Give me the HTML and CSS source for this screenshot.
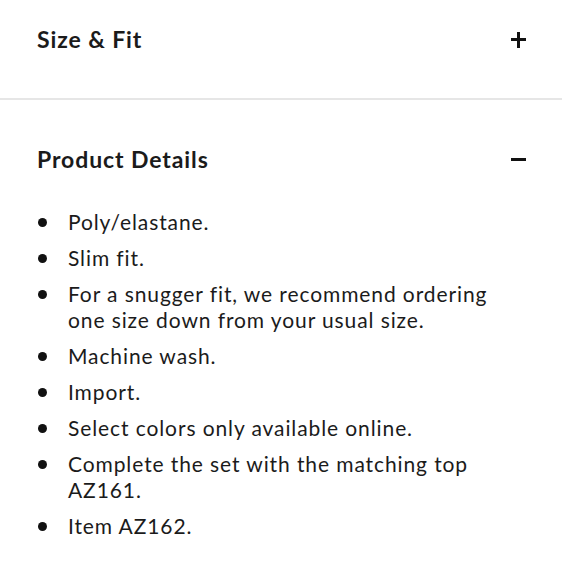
FILE: index.html
```html
<!DOCTYPE html>
<html lang="en">
<head>
<meta charset="utf-8">
<title>Product accordion</title>
<link rel="stylesheet" href="styles.css">
</head>
<body>
<div class="accordion">
  <section class="panel panel-closed">
    <div class="panel-head">
      <h2 class="panel-title">Size &amp; Fit</h2>
      <span class="toggle toggle-plus" aria-hidden="true"></span>
    </div>
  </section>
  <section class="panel panel-open">
    <div class="panel-head">
      <h2 class="panel-title">Product Details</h2>
      <span class="toggle" aria-hidden="true"></span>
    </div>
    <ul class="details">
      <li>Poly/elastane.</li>
      <li>Slim fit.</li>
      <li>For a snugger fit, we recommend ordering one size down from your usual size.</li>
      <li>Machine wash.</li>
      <li>Import.</li>
      <li>Select colors only available online.</li>
      <li>Complete the set with the matching top AZ161.</li>
      <li>Item AZ162.</li>
    </ul>
  </section>
</div>
</body>
</html>
```
FILE: styles.css
```css
html, body {
  margin: 0;
  padding: 0;
  background: #ffffff;
}
body {
  font-family: Lato, "Open Sans", "Liberation Sans", sans-serif;
  color: #1b1b1b;
}
.accordion {
  width: 562px;
}
.panel-closed {
  padding: 24px 0 44px;
  border-bottom: 2px solid #e6e6e6;
}
.panel-open {
  padding: 44px 0 0;
}
.panel-head {
  display: flex;
  justify-content: space-between;
  align-items: center;
  padding: 0 36px 0 37px;
  height: 30px;
}
.panel-title {
  margin: 0;
  font-size: 23px;
  line-height: 30px;
  font-weight: 700;
  letter-spacing: 0.9px;
}
.toggle {
  position: relative;
  width: 15px;
  height: 15px;
}
.toggle::before,
.toggle::after {
  content: "";
  position: absolute;
  background: #111;
}
.toggle::before {
  left: 0;
  top: 6px;
  width: 15px;
  height: 3px;
}
.toggle-plus::after {
  left: 6px;
  top: 0;
  width: 3px;
  height: 16px;
}
.details {
  list-style: none;
  margin: 35px 0 0;
  padding: 0 36px 0 37px;
}
.details li {
  display: flex;
  font-size: 21px;
  line-height: 26px;
  letter-spacing: 0.9px;
  margin-bottom: 10px;
}
.details li::before {
  content: "";
  flex: 0 0 9px;
  width: 9px;
  height: 9px;
  margin: 9px 21px 0 1px;
  border-radius: 50%;
  background: #111;
}
```
